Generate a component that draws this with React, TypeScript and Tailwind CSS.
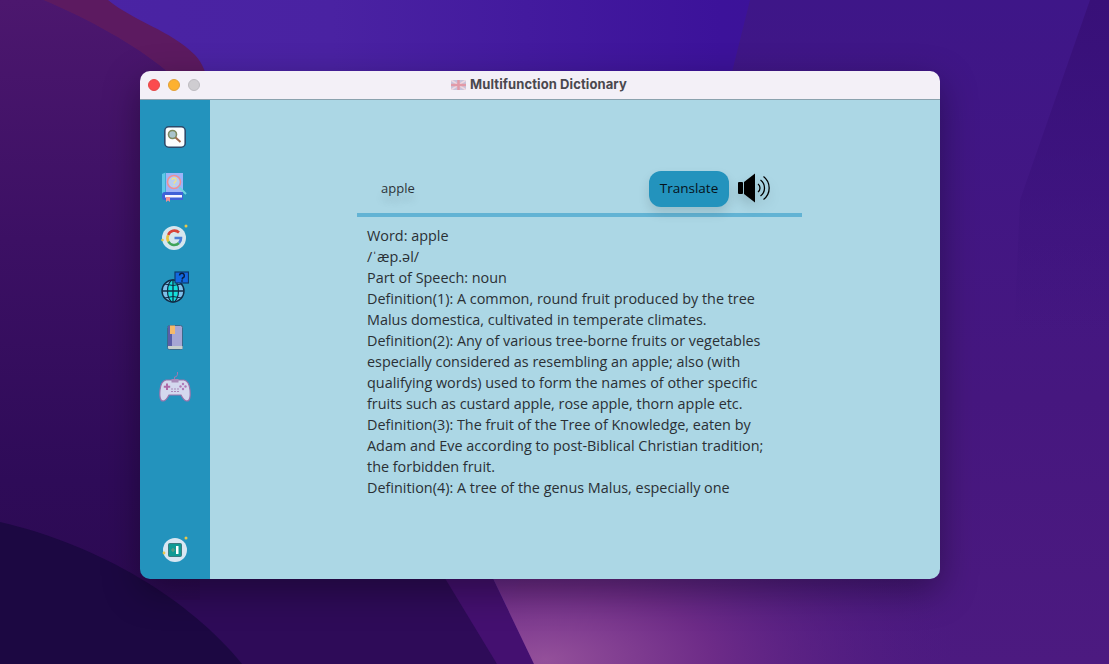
import React from 'react';

const lines = [
  'Word: apple',
  '/ˈæp.əl/',
  'Part of Speech: noun',
  'Definition(1): A common, round fruit produced by the tree',
  'Malus domestica, cultivated in temperate climates.',
  'Definition(2): Any of various tree-borne fruits or vegetables',
  'especially considered as resembling an apple; also (with',
  'qualifying words) used to form the names of other specific',
  'fruits such as custard apple, rose apple, thorn apple etc.',
  'Definition(3): The fruit of the Tree of Knowledge, eaten by',
  'Adam and Eve according to post-Biblical Christian tradition;',
  'the forbidden fruit.',
  'Definition(4): A tree of the genus Malus, especially one',
];

const Wallpaper = () => (
  <svg className="absolute inset-0" width="1109" height="664" viewBox="0 0 1109 664">
    <defs>
      <linearGradient id="base" x1="0" y1="0" x2="1" y2="0">
        <stop offset="0" stopColor="#4a24a4" />
        <stop offset="0.3" stopColor="#4a22a2" />
        <stop offset="0.65" stopColor="#3c129a" />
        <stop offset="1" stopColor="#3c1490" />
      </linearGradient>
      <linearGradient id="right" x1="0" y1="0" x2="0" y2="1">
        <stop offset="0" stopColor="#3e1688" />
        <stop offset="0.6" stopColor="#46177f" />
        <stop offset="1" stopColor="#4c1a80" />
      </linearGradient>
      <linearGradient id="strip" x1="0" y1="0" x2="0" y2="1">
        <stop offset="0" stopColor="#381078" />
        <stop offset="0.5" stopColor="#381078" stopOpacity="0" />
      </linearGradient>
      <linearGradient id="left" x1="0" y1="0" x2="0" y2="1">
        <stop offset="0" stopColor="#4c176e" />
        <stop offset="0.4" stopColor="#3c1064" />
        <stop offset="0.8" stopColor="#2e0b58" />
        <stop offset="1" stopColor="#2c0a52" />
      </linearGradient>
      <radialGradient id="pink" gradientUnits="userSpaceOnUse" cx="545" cy="660" r="420" gradientTransform="translate(545 660) scale(1 0.45) translate(-545 -660)">
        <stop offset="0" stopColor="#94509a" />
        <stop offset="0.4" stopColor="#6f2c88" stopOpacity="0.95" />
        <stop offset="1" stopColor="#4c1a80" stopOpacity="0" />
      </radialGradient>
    </defs>
    <rect width="1109" height="664" fill="url(#base)" />
    <path d="M750 0 L700 200 L480 664 L1109 664 L1109 0 Z" fill="url(#right)" />
    <path d="M1090 0 L1020 200 L1000 664 L1109 664 L1109 0 Z" fill="url(#strip)" />
    <path d="M0 0 L108 0 C135 22 170 30 195 55 C225 85 215 200 200 400 L0 400 Z" fill="#5c1a60" />
    <path d="M0 0 L43 0 C90 20 135 45 165 70 C190 100 200 300 200 400 L0 500 Z" fill="url(#left)" />
    <path d="M0 300 L440 300 L497 664 L0 664 Z" fill="#2e0b58" />
    <path d="M0 0 L43 0 C90 20 135 45 165 70 L200 120 L200 600 L0 600 Z" fill="url(#left)" />
    <path d="M440 570 L489 570 L534 664 L497 664 Z" fill="#441070" />
    <path d="M489 570 L534 664 L1109 664 L1109 570 Z" fill="url(#pink)" />
    <path d="M0 522 C100 545 190 600 242 664 L0 664 Z" fill="#1c0842" />
  </svg>
);

const SearchKeyIcon = () => (
  <svg width="22" height="22" viewBox="0 0 22 22">
    <rect x="0.8" y="0.8" width="20.4" height="20.4" rx="4" fill="#fbfdfe" stroke="#2c4a6a" strokeWidth="1.6" />
    <circle cx="8.5" cy="8.5" r="4" fill="#a9c4cc" stroke="#7d8a60" strokeWidth="1.6" />
    <path d="M11.5 11.5 L16.5 16" stroke="#a06a4c" strokeWidth="2" />
  </svg>
);

const BookLensIcon = () => (
  <svg width="28" height="32" viewBox="0 0 28 32">
    <path d="M5 2 L22 2 L22 23 L5 23 Z" fill="#9cb4f8" />
    <path d="M1 3 L4.5 1.5 L4.5 23 L1 25 Z" fill="#5cc8e8" />
    <circle cx="13" cy="11" r="6.5" fill="#b8cdf0" stroke="#ef8f96" strokeWidth="1.6" />
    <path d="M11 9 A2 2 0 1 1 13.5 11.2 L13 12.8 M13 14 L13 15" fill="none" stroke="#f3e08a" strokeWidth="1.4" />
    <path d="M18 16 L25 23" stroke="#6fd2e0" strokeWidth="2" />
    <path d="M1 24 Q1 21 4 21 L22 21 L22 29 L4 29 Q1 29 1 26 Z" fill="#3f62d8" />
    <rect x="4" y="24" width="17" height="2.5" fill="#f4f6ff" />
    <path d="M5 26 L9 26 L9 31 L7 29.5 L5 31 Z" fill="#ef8f96" />
  </svg>
);

const GoogleIcon = () => (
  <svg width="28" height="28" viewBox="0 0 28 28">
    <circle cx="13" cy="15" r="12" fill="#d6e6ee" />
    <path d="M7.2 12 A6.6 6.6 0 0 1 18 9.5" fill="none" stroke="#d8433a" strokeWidth="2.6" />
    <path d="M7.2 12 A6.6 6.6 0 0 0 7.4 18.5" fill="none" stroke="#eac23c" strokeWidth="2.6" />
    <path d="M7.4 18.5 A6.6 6.6 0 0 0 18 20" fill="none" stroke="#3fa45a" strokeWidth="2.6" />
    <path d="M13.5 15 L20 15 A6.6 6.6 0 0 1 18 20" fill="none" stroke="#4a7fd8" strokeWidth="2.6" />
    <circle cx="25" cy="3" r="1.5" fill="#e8c84a" />
    <circle cx="1.5" cy="17" r="1.3" fill="#e8c84a" />
  </svg>
);

const GlobeHelpIcon = () => (
  <svg width="28" height="32" viewBox="0 0 28 32">
    <circle cx="12" cy="20" r="11" fill="#7fc0ea" stroke="#102a44" strokeWidth="1.4" />
    <ellipse cx="12" cy="20" rx="5.5" ry="11" fill="#14e0dc" stroke="#102a44" strokeWidth="1.2" />
    <path d="M1 20 L23 20 M12 9 L12 31" stroke="#102a44" strokeWidth="1.3" />
    <path d="M3.5 13 Q12 16 20.5 13 M3.5 27 Q12 24 20.5 27" fill="none" stroke="#102a44" strokeWidth="1" />
    <rect x="14" y="1" width="13.5" height="11" fill="#1268e0" stroke="#0e3a6a" strokeWidth="1.2" />
    <path d="M18.5 4.5 A2.4 2.4 0 1 1 21.5 7 L21 8.5 M21 9.3 L21 10.8" fill="none" stroke="#0a1c3c" strokeWidth="1.4" />
  </svg>
);

const NotebookIcon = () => (
  <svg width="16" height="25" viewBox="0 0 16 25">
    <rect x="0.5" y="0.5" width="15" height="24" rx="2" fill="#a6a6d4" stroke="#3a6a8a" strokeWidth="1" />
    <rect x="1" y="1" width="4" height="20" fill="#5b5ea8" />
    <path d="M1 21 L15.5 21 L15.5 24 L2.5 24 Q1 24 1 22.5 Z" fill="#c8d0cc" />
    <path d="M3 0.5 L8 0.5 L8 9 L3 9 Z" fill="#f6ba6a" />
  </svg>
);

const GamepadIcon = () => (
  <svg width="32" height="32" viewBox="0 0 32 32">
    <path d="M18.5 1 Q19 6 15.5 6 L15.5 9" fill="none" stroke="#a478b0" strokeWidth="1" />
    <path d="M7 9 L25 9 Q30 10 31 19 Q32 30 28 30 Q25 30 22 24 L10 24 Q7 30 4 30 Q0 30 1 19 Q2 10 7 9 Z" fill="#d4d8ee" stroke="#9a74ac" strokeWidth="1.2" />
    <rect x="12.5" y="8" width="7" height="3.5" fill="#a98ab8" />
    <path d="M8 12.5 L8 19 M4.8 15.8 L11.2 15.8" stroke="#b068a8" strokeWidth="2" />
    <circle cx="24" cy="13" r="1.2" fill="#b078b8" />
    <circle cx="24" cy="18" r="1.2" fill="#b078b8" />
    <circle cx="21.5" cy="15.5" r="1.2" fill="#b078b8" />
    <circle cx="26.5" cy="15.5" r="1.2" fill="#b078b8" />
    <path d="M12 18 L20 18 M12 20.5 L20 20.5" stroke="#a98ab8" strokeWidth="1" strokeDasharray="2 1" />
  </svg>
);

const ExitIcon = () => (
  <svg width="28" height="28" viewBox="0 0 28 28">
    <circle cx="14" cy="15" r="12" fill="#d8e6f2" />
    <rect x="7.5" y="8.5" width="13" height="13" rx="1" fill="#109a94" stroke="#3a7a80" strokeWidth="1" />
    <rect x="15" y="11" width="2.5" height="8" fill="#ffffff" />
    <path d="M10 15 L14 15 M12 13 L12 17" stroke="#6c9a80" strokeWidth="1.2" />
    <circle cx="25" cy="3" r="1.5" fill="#e8c84a" />
    <circle cx="3" cy="18" r="1.4" fill="#e8c84a" />
  </svg>
);

const SpeakerIcon = () => (
  <svg width="34" height="32" viewBox="0 0 34 32">
    <rect x="1" y="10" width="5" height="12" rx="1" fill="#000" />
    <path d="M7 10 L18 1.5 L18 30.5 L7 22 Z" fill="#000" />
    <path d="M21 12 A5 5 0 0 1 21 20" fill="none" stroke="#000" strokeWidth="1.3" />
    <path d="M23.5 8 A10 10 0 0 1 23.5 24" fill="none" stroke="#000" strokeWidth="1.3" />
    <path d="M26.5 4.5 A14.5 14.5 0 0 1 26.5 27.5" fill="none" stroke="#000" strokeWidth="1.3" />
  </svg>
);

export default function App() {
  return (
    <div className="relative w-[1109px] h-[664px] overflow-hidden font-['Open_Sans',sans-serif]">
      <Wallpaper />
      {/* window on the desktop */}
      <div className="absolute left-[140px] top-[71px] w-[800px] h-[508px] rounded-[10px] overflow-hidden flex flex-col shadow-[0_12px_36px_rgba(0,0,0,0.35)]">
        <div className="h-[29px] shrink-0 bg-[#f3f0f7] border-b border-[#8aa2ae] flex items-center relative">
          <div className="flex items-center gap-[8px] pl-[8px]">
            <span className="w-[12px] h-[12px] rounded-full bg-[#fb4b4e] border border-[#e24a48]" />
            <span className="w-[12px] h-[12px] rounded-full bg-[#fdb12f] border border-[#e0a03a]" />
            <span className="w-[12px] h-[12px] rounded-full bg-[#cfcdd1] border border-[#bdbbc0]" />
          </div>
          <div className="absolute inset-0 flex items-center justify-center gap-[4px] pr-[2px] text-[13px] font-bold text-[#4a484e] font-['Inter',sans-serif]">
            <svg width="15" height="10" viewBox="0 0 15 10">
              <rect width="15" height="10" fill="#c8c4dc" />
              <path d="M0 0 L15 10 M15 0 L0 10" stroke="#f0d8e0" strokeWidth="1.5" />
              <path d="M7.5 0 L7.5 10 M0 5 L15 5" stroke="#e29aa8" strokeWidth="2.5" />
            </svg>
            <span className="tracking-[0.1px]">Multifunction Dictionary</span>
          </div>
        </div>
        <div className="flex-1 flex min-h-0">
          <aside className="w-[70px] shrink-0 bg-[#2393bd] flex flex-col items-center pt-[12px] pb-[16px]">
            <div className="h-[50px] flex items-center justify-center"><SearchKeyIcon /></div>
            <div className="h-[50px] flex items-center justify-center"><BookLensIcon /></div>
            <div className="h-[50px] flex items-center justify-center"><GoogleIcon /></div>
            <div className="h-[50px] flex items-center justify-center"><GlobeHelpIcon /></div>
            <div className="h-[50px] flex items-center justify-center"><NotebookIcon /></div>
            <div className="h-[50px] flex items-center justify-center"><GamepadIcon /></div>
            <div className="mt-auto h-[28px] flex items-center justify-center"><ExitIcon /></div>
          </aside>
          <main className="flex-1 bg-[#acd7e5] pl-[147px] pt-[71px]">
            <div className="w-[445px]">
              <div className="h-[42px] flex items-start">
                <div className="w-[292px] h-[35px] pl-[24px] flex items-center text-[13px] text-[#2c3338] [text-shadow:0_8px_8px_rgba(0,0,0,0.15)]">apple</div>
                <button className="w-[80px] h-[36px] pb-[1px] rounded-[12px] bg-[#2393bd] text-[13.5px] text-[#06121a] shadow-[0_6px_12px_rgba(0,0,0,0.12)]">Translate</button>
                <div className="ml-[8px] -mt-[1px] h-[36px] flex items-center drop-shadow-[0_6px_6px_rgba(0,0,0,0.15)]"><SpeakerIcon /></div>
              </div>
              <div className="h-[4px] bg-[#62b3d4]" />
              <div className="pl-[10px] pt-[8px] text-[14.4px] leading-[21px] text-[#2a3035]">
                {lines.map((line, i) => (
                  <div key={i} className="whitespace-nowrap">{line}</div>
                ))}
              </div>
            </div>
          </main>
        </div>
      </div>
    </div>
  );
}
